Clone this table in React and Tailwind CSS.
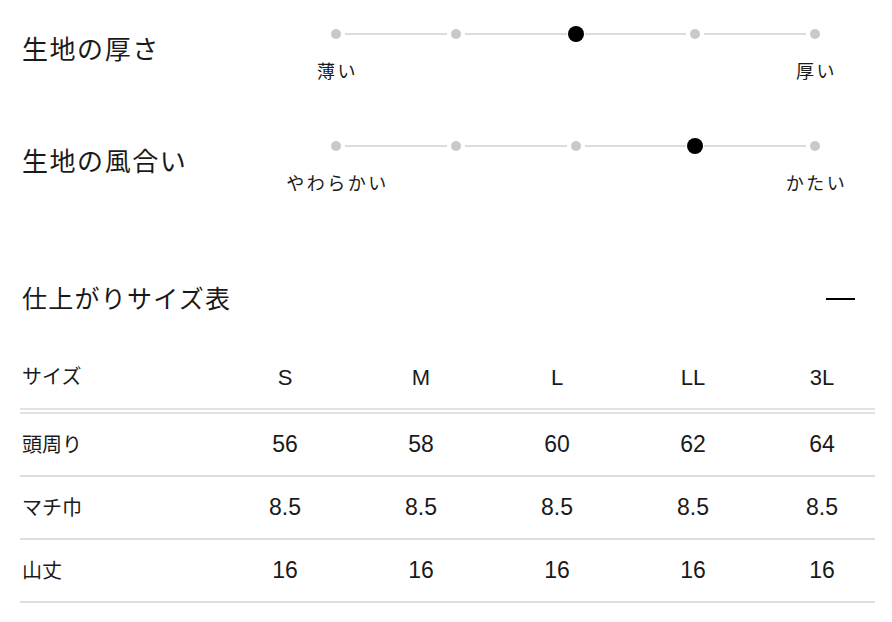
const sizes = ["S", "M", "L", "LL", "3L"];

const rows = [
  { label: "頭周り", values: ["56", "58", "60", "62", "64"] },
  { label: "マチ巾", values: ["8.5", "8.5", "8.5", "8.5", "8.5"] },
  { label: "山丈", values: ["16", "16", "16", "16", "16"] },
];

const jp = "font-['Liberation_Sans','Noto_Sans_CJK_JP',sans-serif]";

function Scale({ steps = 5, active, left, right }) {
  const dots = Array.from({ length: steps }, (_, i) => i);
  return (
    <div className="w-[495px]">
      <div className="flex items-center h-4">
        {dots.map((i) => (
          <div key={i} className="contents">
            <div className="w-4 h-4 flex items-center justify-center shrink-0">
              {i === active ? (
                <span className="w-4 h-4 rounded-full bg-black" />
              ) : (
                <span className="w-[10px] h-[10px] rounded-full bg-[#c9c9c9]" />
              )}
            </div>
            {i < steps - 1 && <div className="flex-1 h-[2px] mx-px bg-[#dcdcdc]" />}
          </div>
        ))}
      </div>
      <div className="flex justify-between -mx-[52px] mt-[18px] text-[18px] leading-6 tracking-[0.14em] text-[#1a1a1a]">
        <span className="w-[120px] text-center pl-[3px]">{left}</span>
        <span className="w-[120px] text-center pl-[3px]">{right}</span>
      </div>
    </div>
  );
}

function FeelRow({ title, active, left, right, className }) {
  return (
    <div className={"flex items-start " + className}>
      <div className="w-[308px] pl-0.5 mt-2 text-[26px] leading-8 tracking-[0.06em] text-[#1a1a1a]">
        {title}
      </div>
      <Scale active={active} left={left} right={right} />
    </div>
  );
}

export default function App() {
  return (
    <div className={"w-[892px] h-[622px] bg-white pl-5 pr-[17px] overflow-hidden " + jp}>
      <FeelRow title="生地の厚さ" active={2} left="薄い" right="厚い" className="pt-[26px]" />
      <FeelRow title="生地の風合い" active={3} left="やわらかい" right="かたい" className="mt-[54px]" />

      <div className="mt-[87px] flex items-center justify-between">
        <h2 className="pl-0.5 text-[25px] leading-8 tracking-[0.05em] text-[#1a1a1a]">
          仕上がりサイズ表
        </h2>
        <span className="w-[29px] h-[2px] bg-black mr-5" />
      </div>

      <div className="mt-[31px]">
        <div className="grid grid-cols-[197px_136px_136px_136px_136px_114px] items-center h-[68px] border-b-[6px] border-double border-[#e3e3e3]">
          <div className="pl-0.5 text-[20px] text-[#1a1a1a]">サイズ</div>
          {sizes.map((s, i) => (
            <div
              key={s}
              className={"text-center text-[22px] text-[#1a1a1a] " + (i === 4 ? "pl-2" : "")}
            >
              {s}
            </div>
          ))}
        </div>
        {rows.map((r) => (
          <div
            key={r.label}
            className="grid grid-cols-[197px_136px_136px_136px_136px_114px] items-center h-[63px] border-b-2 border-[#dedede]"
          >
            <div className="pl-0.5 text-[20px] text-[#1a1a1a]">{r.label}</div>
            {r.values.map((v, i) => (
              <div
                key={i}
                className={"text-center text-[23px] text-[#1a1a1a] " + (i === 4 ? "pl-2" : "")}
              >
                {v}
              </div>
            ))}
          </div>
        ))}
      </div>
    </div>
  );
}
